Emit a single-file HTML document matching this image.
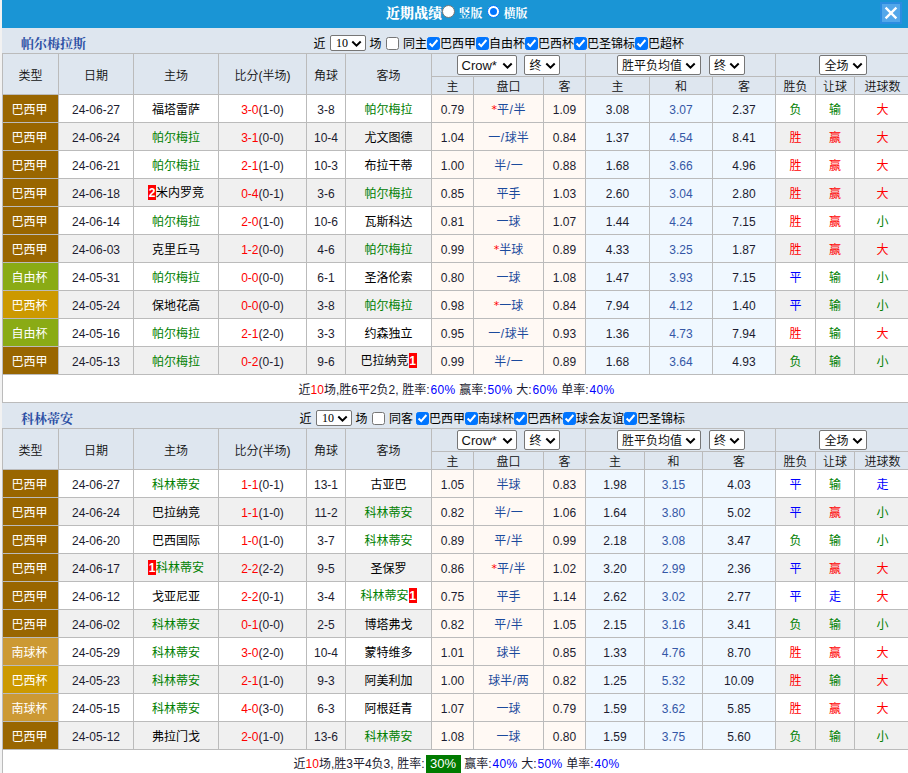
<!DOCTYPE html>
<html lang="zh-CN"><head><meta charset="utf-8"><title>近期战绩</title>
<style>
html,body{margin:0;padding:0;background:#f2f2f2;}
body{font-family:"Liberation Sans","Noto Sans CJK SC",sans-serif;font-size:12px;color:#000;}
#wrap{width:906px;height:773px;margin-left:2px;overflow:hidden;position:relative;background:#fff;}
.top{height:28px;background:#1a95d5;position:relative;color:#fff;white-space:nowrap;}
.tt{position:absolute;left:384px;top:5px;font-size:14px;font-family:"Liberation Serif","Noto Serif CJK SC",serif;font-weight:900;line-height:18px;}
.rd{position:absolute;top:5px;width:13px;height:13px;border-radius:50%;background:#fff;border:1px solid #767676;box-sizing:border-box;}
.rd.on{border:1px solid #0075ff;}
.rd.on i{position:absolute;left:2px;top:2px;width:7px;height:7px;border-radius:50%;background:#0075ff}
.rl{position:absolute;top:6px;font-size:12px;line-height:16px;font-family:"Liberation Serif","Noto Serif CJK SC",serif;font-weight:700}
.x{position:absolute;left:878px;top:2px;width:18px;height:18px;background:#54a7ea;border:2px solid #2b8de1;}
.x svg{display:block}
.st{height:25px;background:#dee6ef;position:relative;}
.tn{position:absolute;left:19px;top:7px;font-size:13px;line-height:17px;color:#2d50a5;font-family:"Liberation Serif","Noto Serif CJK SC",serif;}
.ft{position:absolute;top:8px;line-height:16px;white-space:nowrap}
table{border-collapse:collapse;table-layout:fixed;width:908px;}
th,td{border:1px solid #bbb;text-align:center;padding:0;font-weight:normal;overflow:hidden;white-space:nowrap;}
th{background:#dee6ef;font-weight:350;color:#111}
tr.h1{height:23px}
tr.h2{height:18px}
tr.od,tr.ev,tr.sm{height:28px}
tr.ev td{background:#f0f0f0}
td.ty{color:#fff;padding-right:2px}
td.hc{background:#fff9f4 !important}
td.oc{background:#f0f8ff !important}
td.n,td.dt{color:#1c1c30;padding-top:2px}
.g{color:#008000}.r{color:#ff0000}.b{color:#0000ff}.k{color:#000}
.pk{color:#1b4a9c}
.pk i{color:#f00;font-style:normal;font-family:"DejaVu Sans",sans-serif;font-size:11px;position:relative;top:-1px}
.pk u{text-decoration:none;margin:0 0.7px}
td.o2{color:#3457a6}
.rc{background:#f00;color:#fff;font-weight:bold;display:inline-block;width:8px;height:15px;line-height:17px;vertical-align:middle;position:relative;top:-2px;text-align:center;overflow:hidden;letter-spacing:-0.3px}
.sm td{background:#fff;border-bottom:1px solid #bbb}
.lo{background:#007a00;color:#fff;display:inline-block;height:18px;line-height:18px;padding:0 4.5px;font-size:13px;vertical-align:middle;position:relative;top:-0.5px}
.sm td{color:#1c1c30;word-spacing:0.4px}
.sm .b{letter-spacing:0.33px}
.sm s{text-decoration:none;letter-spacing:0.9px}
.sm em{font-style:normal;color:#000}
.sel{display:inline-block;box-sizing:border-box;height:20px;border:1px solid #767676;border-radius:2px;background:#fff;vertical-align:middle;text-align:left;padding-left:4.5px;padding-top:2px;line-height:16px;position:relative;font-size:12px;color:#111;font-weight:400}
.sel svg{position:absolute;right:3.3px;top:5.6px}
.sel.s10{position:absolute;top:7px;height:16px;line-height:14px;padding-top:0;color:#000;font-family:"Liberation Serif",serif;padding-left:5px}
.sel.s10 svg{top:4px}
.cb{position:absolute;top:9px;width:13px;height:13px;box-sizing:border-box;border:1px solid #767676;border-radius:2.5px;background:#fff;}
.cb.on{background:#0075ff;border-color:#0075ff}
.cb svg{position:absolute;left:-1px;top:-1px}
</style></head><body>
<div id="wrap">
<div class="top"><b class="tt">近期战绩</b><span class="rd" style="left:439.5px"></span><span class="rl" style="left:456.5px">竖版</span><span class="rd on" style="left:485px"><i></i></span><span class="rl" style="left:501.5px">横版</span>
<span class="x"><svg width="18" height="18" viewBox="0 0 18 18"><path d="M3.6 3.6 L14.4 14.4 M14.4 3.6 L3.6 14.4" stroke="#fff" stroke-width="2.3" fill="none"/></svg></span></div>
<div class="st"><b class="tn">帕尔梅拉斯</b><span class="ft" style="left:311.5px">近</span><span class="sel s10" style="left:328.0px;width:36px"><span>10</span><svg width="11" height="8" viewBox="0 0 11 8"><path d="M1.3 1.5 L5.5 5.6 L9.7 1.5" fill="none" stroke="#000" stroke-width="2"/></svg></span><span class="ft" style="left:367.5px">场</span><span class="cb" style="left:384.0px"></span><span class="ft" style="left:401.0px">同主</span><span class="cb on" style="left:425.0px"><svg width="13" height="13" viewBox="0 0 13 13"><path d="M2.6 6.5 L5.2 9.1 L10.4 3.0" fill="none" stroke="#fff" stroke-width="2"/></svg></span><span class="ft" style="left:438.0px">巴西甲</span><span class="cb on" style="left:474.0px"><svg width="13" height="13" viewBox="0 0 13 13"><path d="M2.6 6.5 L5.2 9.1 L10.4 3.0" fill="none" stroke="#fff" stroke-width="2"/></svg></span><span class="ft" style="left:487.0px">自由杯</span><span class="cb on" style="left:523.0px"><svg width="13" height="13" viewBox="0 0 13 13"><path d="M2.6 6.5 L5.2 9.1 L10.4 3.0" fill="none" stroke="#fff" stroke-width="2"/></svg></span><span class="ft" style="left:536.0px">巴西杯</span><span class="cb on" style="left:572.0px"><svg width="13" height="13" viewBox="0 0 13 13"><path d="M2.6 6.5 L5.2 9.1 L10.4 3.0" fill="none" stroke="#fff" stroke-width="2"/></svg></span><span class="ft" style="left:585.0px">巴圣锦标</span><span class="cb on" style="left:633.0px"><svg width="13" height="13" viewBox="0 0 13 13"><path d="M2.6 6.5 L5.2 9.1 L10.4 3.0" fill="none" stroke="#fff" stroke-width="2"/></svg></span><span class="ft" style="left:646.0px">巴超杯</span></div>
<table cellspacing="0" cellpadding="0"><colgroup><col style="width:56px"><col style="width:75px"><col style="width:85px"><col style="width:88px"><col style="width:39px"><col style="width:86px"><col style="width:42px"><col style="width:70px"><col style="width:42px"><col style="width:64px"><col style="width:63px"><col style="width:63px"><col style="width:40px"><col style="width:39px"><col style="width:56px"></colgroup>
<tr class="h1"><th rowspan="2" class="c0">类型</th><th rowspan="2" class="c1">日期</th><th rowspan="2" class="c2">主场</th><th rowspan="2" class="c3">比分(半场)</th><th rowspan="2" class="c4">角球</th><th rowspan="2" class="c5">客场</th><th colspan="3" class="sh"><span class="sel" style="width:60px;margin-left:0px"><span><span style="font-size:13px;margin-left:-1px">Crow*</span></span><svg width="11" height="8" viewBox="0 0 11 8"><path d="M1.3 1.5 L5.5 5.6 L9.7 1.5" fill="none" stroke="#000" stroke-width="2"/></svg></span><span class="sel" style="width:36px;margin-left:7px"><span>终</span><svg width="11" height="8" viewBox="0 0 11 8"><path d="M1.3 1.5 L5.5 5.6 L9.7 1.5" fill="none" stroke="#000" stroke-width="2"/></svg></span></th><th colspan="3" class="sh"><span class="sel" style="width:84px;margin-left:0px"><span>胜平负均值</span><svg width="11" height="8" viewBox="0 0 11 8"><path d="M1.3 1.5 L5.5 5.6 L9.7 1.5" fill="none" stroke="#000" stroke-width="2"/></svg></span><span class="sel" style="width:36px;margin-left:8px"><span>终</span><svg width="11" height="8" viewBox="0 0 11 8"><path d="M1.3 1.5 L5.5 5.6 L9.7 1.5" fill="none" stroke="#000" stroke-width="2"/></svg></span></th><th colspan="3" class="sh"><span class="sel" style="width:48px;margin-left:0px"><span>全场</span><svg width="11" height="8" viewBox="0 0 11 8"><path d="M1.3 1.5 L5.5 5.6 L9.7 1.5" fill="none" stroke="#000" stroke-width="2"/></svg></span></th></tr><tr class="h2"><th class="c6">主</th><th class="c7">盘口</th><th class="c8">客</th><th class="c9">主</th><th class="c10">和</th><th class="c11">客</th><th class="c12">胜负</th><th class="c13">让球</th><th class="c14">进球数</th></tr>
<tr class="od"><td class="ty" style="background:#996600">巴西甲</td><td class="dt">24-06-27</td><td><span class="k">福塔雷萨</span></td><td class="n"><span class="r">3-0</span>(1-0)</td><td class="n">3-8</td><td><span class="g">帕尔梅拉</span></td><td class="hc n">0.79</td><td class="hc pk"><i>*</i>平<u>/</u>半</td><td class="hc n">1.09</td><td class="oc n">3.08</td><td class="oc n o2">3.07</td><td class="oc n">2.37</td><td class="g">负</td><td class="g">输</td><td class="r">大</td></tr>
<tr class="ev"><td class="ty" style="background:#996600">巴西甲</td><td class="dt">24-06-24</td><td><span class="g">帕尔梅拉</span></td><td class="n"><span class="r">3-1</span>(0-0)</td><td class="n">10-4</td><td><span class="k">尤文图德</span></td><td class="hc n">1.04</td><td class="hc pk">一<u>/</u>球半</td><td class="hc n">0.84</td><td class="oc n">1.37</td><td class="oc n o2">4.54</td><td class="oc n">8.41</td><td class="r">胜</td><td class="r">赢</td><td class="r">大</td></tr>
<tr class="od"><td class="ty" style="background:#996600">巴西甲</td><td class="dt">24-06-21</td><td><span class="g">帕尔梅拉</span></td><td class="n"><span class="r">2-1</span>(1-0)</td><td class="n">10-3</td><td><span class="k">布拉干蒂</span></td><td class="hc n">1.00</td><td class="hc pk">半<u>/</u>一</td><td class="hc n">0.88</td><td class="oc n">1.68</td><td class="oc n o2">3.66</td><td class="oc n">4.96</td><td class="r">胜</td><td class="r">赢</td><td class="r">大</td></tr>
<tr class="ev"><td class="ty" style="background:#996600">巴西甲</td><td class="dt">24-06-18</td><td><span class="rc">2</span><span class="k">米内罗竞</span></td><td class="n"><span class="r">0-4</span>(0-1)</td><td class="n">3-6</td><td><span class="g">帕尔梅拉</span></td><td class="hc n">0.85</td><td class="hc pk">平手</td><td class="hc n">1.03</td><td class="oc n">2.60</td><td class="oc n o2">3.04</td><td class="oc n">2.80</td><td class="r">胜</td><td class="r">赢</td><td class="r">大</td></tr>
<tr class="od"><td class="ty" style="background:#996600">巴西甲</td><td class="dt">24-06-14</td><td><span class="g">帕尔梅拉</span></td><td class="n"><span class="r">2-0</span>(1-0)</td><td class="n">10-6</td><td><span class="k">瓦斯科达</span></td><td class="hc n">0.81</td><td class="hc pk">一球</td><td class="hc n">1.07</td><td class="oc n">1.44</td><td class="oc n o2">4.24</td><td class="oc n">7.15</td><td class="r">胜</td><td class="r">赢</td><td class="g">小</td></tr>
<tr class="ev"><td class="ty" style="background:#996600">巴西甲</td><td class="dt">24-06-03</td><td><span class="k">克里丘马</span></td><td class="n"><span class="r">1-2</span>(0-0)</td><td class="n">4-6</td><td><span class="g">帕尔梅拉</span></td><td class="hc n">0.99</td><td class="hc pk"><i>*</i>半球</td><td class="hc n">0.89</td><td class="oc n">4.33</td><td class="oc n o2">3.25</td><td class="oc n">1.87</td><td class="r">胜</td><td class="r">赢</td><td class="r">大</td></tr>
<tr class="od"><td class="ty" style="background:#8aab15">自由杯</td><td class="dt">24-05-31</td><td><span class="g">帕尔梅拉</span></td><td class="n"><span class="r">0-0</span>(0-0)</td><td class="n">6-1</td><td><span class="k">圣洛伦索</span></td><td class="hc n">0.80</td><td class="hc pk">一球</td><td class="hc n">1.08</td><td class="oc n">1.47</td><td class="oc n o2">3.93</td><td class="oc n">7.15</td><td class="b">平</td><td class="g">输</td><td class="g">小</td></tr>
<tr class="ev"><td class="ty" style="background:#cc9900">巴西杯</td><td class="dt">24-05-24</td><td><span class="k">保地花高</span></td><td class="n"><span class="r">0-0</span>(0-0)</td><td class="n">3-8</td><td><span class="g">帕尔梅拉</span></td><td class="hc n">0.98</td><td class="hc pk"><i>*</i>一球</td><td class="hc n">0.84</td><td class="oc n">7.94</td><td class="oc n o2">4.12</td><td class="oc n">1.40</td><td class="b">平</td><td class="g">输</td><td class="g">小</td></tr>
<tr class="od"><td class="ty" style="background:#8aab15">自由杯</td><td class="dt">24-05-16</td><td><span class="g">帕尔梅拉</span></td><td class="n"><span class="r">2-1</span>(2-0)</td><td class="n">3-3</td><td><span class="k">约森独立</span></td><td class="hc n">0.95</td><td class="hc pk">一<u>/</u>球半</td><td class="hc n">0.93</td><td class="oc n">1.36</td><td class="oc n o2">4.73</td><td class="oc n">7.94</td><td class="r">胜</td><td class="g">输</td><td class="r">大</td></tr>
<tr class="ev"><td class="ty" style="background:#996600">巴西甲</td><td class="dt">24-05-13</td><td><span class="g">帕尔梅拉</span></td><td class="n"><span class="r">0-2</span>(0-1)</td><td class="n">9-6</td><td><span class="k">巴拉纳竞</span><span class="rc">1</span></td><td class="hc n">0.99</td><td class="hc pk">半<u>/</u>一</td><td class="hc n">0.89</td><td class="oc n">1.68</td><td class="oc n o2">3.64</td><td class="oc n">4.93</td><td class="g">负</td><td class="g">输</td><td class="g">小</td></tr>
<tr class="sm"><td colspan="15">近<span class="r">10</span>场,胜6平2负2, 胜率<s>:</s><span class="b">60%</span> 赢率<s>:</s><span class="b">50%</span> 大<s>:</s><span class="b">60%</span> 单率<s>:</s><span class="b">40%</span></td></tr></table>

<div class="st"><b class="tn">科林蒂安</b><span class="ft" style="left:297.5px">近</span><span class="sel s10" style="left:314.0px;width:36px"><span>10</span><svg width="11" height="8" viewBox="0 0 11 8"><path d="M1.3 1.5 L5.5 5.6 L9.7 1.5" fill="none" stroke="#000" stroke-width="2"/></svg></span><span class="ft" style="left:353.5px">场</span><span class="cb" style="left:370.0px"></span><span class="ft" style="left:387.0px">同客</span><span class="cb on" style="left:414.0px"><svg width="13" height="13" viewBox="0 0 13 13"><path d="M2.6 6.5 L5.2 9.1 L10.4 3.0" fill="none" stroke="#fff" stroke-width="2"/></svg></span><span class="ft" style="left:427.0px">巴西甲</span><span class="cb on" style="left:463.0px"><svg width="13" height="13" viewBox="0 0 13 13"><path d="M2.6 6.5 L5.2 9.1 L10.4 3.0" fill="none" stroke="#fff" stroke-width="2"/></svg></span><span class="ft" style="left:476.0px">南球杯</span><span class="cb on" style="left:512.0px"><svg width="13" height="13" viewBox="0 0 13 13"><path d="M2.6 6.5 L5.2 9.1 L10.4 3.0" fill="none" stroke="#fff" stroke-width="2"/></svg></span><span class="ft" style="left:525.0px">巴西杯</span><span class="cb on" style="left:561.0px"><svg width="13" height="13" viewBox="0 0 13 13"><path d="M2.6 6.5 L5.2 9.1 L10.4 3.0" fill="none" stroke="#fff" stroke-width="2"/></svg></span><span class="ft" style="left:574.0px">球会友谊</span><span class="cb on" style="left:622.0px"><svg width="13" height="13" viewBox="0 0 13 13"><path d="M2.6 6.5 L5.2 9.1 L10.4 3.0" fill="none" stroke="#fff" stroke-width="2"/></svg></span><span class="ft" style="left:635.0px">巴圣锦标</span></div>
<table cellspacing="0" cellpadding="0"><colgroup><col style="width:56px"><col style="width:75px"><col style="width:85px"><col style="width:88px"><col style="width:39px"><col style="width:86px"><col style="width:42px"><col style="width:70px"><col style="width:42px"><col style="width:59px"><col style="width:58px"><col style="width:73px"><col style="width:40px"><col style="width:39px"><col style="width:56px"></colgroup>
<tr class="h1"><th rowspan="2" class="c0">类型</th><th rowspan="2" class="c1">日期</th><th rowspan="2" class="c2">主场</th><th rowspan="2" class="c3">比分(半场)</th><th rowspan="2" class="c4">角球</th><th rowspan="2" class="c5">客场</th><th colspan="3" class="sh"><span class="sel" style="width:60px;margin-left:0px"><span><span style="font-size:13px;margin-left:-1px">Crow*</span></span><svg width="11" height="8" viewBox="0 0 11 8"><path d="M1.3 1.5 L5.5 5.6 L9.7 1.5" fill="none" stroke="#000" stroke-width="2"/></svg></span><span class="sel" style="width:36px;margin-left:7px"><span>终</span><svg width="11" height="8" viewBox="0 0 11 8"><path d="M1.3 1.5 L5.5 5.6 L9.7 1.5" fill="none" stroke="#000" stroke-width="2"/></svg></span></th><th colspan="3" class="sh"><span class="sel" style="width:84px;margin-left:0px"><span>胜平负均值</span><svg width="11" height="8" viewBox="0 0 11 8"><path d="M1.3 1.5 L5.5 5.6 L9.7 1.5" fill="none" stroke="#000" stroke-width="2"/></svg></span><span class="sel" style="width:36px;margin-left:8px"><span>终</span><svg width="11" height="8" viewBox="0 0 11 8"><path d="M1.3 1.5 L5.5 5.6 L9.7 1.5" fill="none" stroke="#000" stroke-width="2"/></svg></span></th><th colspan="3" class="sh"><span class="sel" style="width:48px;margin-left:0px"><span>全场</span><svg width="11" height="8" viewBox="0 0 11 8"><path d="M1.3 1.5 L5.5 5.6 L9.7 1.5" fill="none" stroke="#000" stroke-width="2"/></svg></span></th></tr><tr class="h2"><th class="c6">主</th><th class="c7">盘口</th><th class="c8">客</th><th class="c9">主</th><th class="c10">和</th><th class="c11">客</th><th class="c12">胜负</th><th class="c13">让球</th><th class="c14">进球数</th></tr>
<tr class="od"><td class="ty" style="background:#996600">巴西甲</td><td class="dt">24-06-27</td><td><span class="g">科林蒂安</span></td><td class="n"><span class="r">1-1</span>(0-1)</td><td class="n">13-1</td><td><span class="k">古亚巴</span></td><td class="hc n">1.05</td><td class="hc pk">半球</td><td class="hc n">0.83</td><td class="oc n">1.98</td><td class="oc n o2">3.15</td><td class="oc n">4.03</td><td class="b">平</td><td class="g">输</td><td class="b">走</td></tr>
<tr class="ev"><td class="ty" style="background:#996600">巴西甲</td><td class="dt">24-06-24</td><td><span class="k">巴拉纳竞</span></td><td class="n"><span class="r">1-1</span>(1-0)</td><td class="n">11-2</td><td><span class="g">科林蒂安</span></td><td class="hc n">0.82</td><td class="hc pk">半<u>/</u>一</td><td class="hc n">1.06</td><td class="oc n">1.64</td><td class="oc n o2">3.80</td><td class="oc n">5.02</td><td class="b">平</td><td class="r">赢</td><td class="g">小</td></tr>
<tr class="od"><td class="ty" style="background:#996600">巴西甲</td><td class="dt">24-06-20</td><td><span class="k">巴西国际</span></td><td class="n"><span class="r">1-0</span>(1-0)</td><td class="n">3-7</td><td><span class="g">科林蒂安</span></td><td class="hc n">0.89</td><td class="hc pk">平<u>/</u>半</td><td class="hc n">0.99</td><td class="oc n">2.18</td><td class="oc n o2">3.08</td><td class="oc n">3.47</td><td class="g">负</td><td class="g">输</td><td class="g">小</td></tr>
<tr class="ev"><td class="ty" style="background:#996600">巴西甲</td><td class="dt">24-06-17</td><td><span class="rc">1</span><span class="g">科林蒂安</span></td><td class="n"><span class="r">2-2</span>(2-2)</td><td class="n">9-5</td><td><span class="k">圣保罗</span></td><td class="hc n">0.86</td><td class="hc pk"><i>*</i>平<u>/</u>半</td><td class="hc n">1.02</td><td class="oc n">3.20</td><td class="oc n o2">2.99</td><td class="oc n">2.36</td><td class="b">平</td><td class="r">赢</td><td class="r">大</td></tr>
<tr class="od"><td class="ty" style="background:#996600">巴西甲</td><td class="dt">24-06-12</td><td><span class="k">戈亚尼亚</span></td><td class="n"><span class="r">2-2</span>(0-1)</td><td class="n">3-4</td><td><span class="g">科林蒂安</span><span class="rc">1</span></td><td class="hc n">0.75</td><td class="hc pk">平手</td><td class="hc n">1.14</td><td class="oc n">2.62</td><td class="oc n o2">3.02</td><td class="oc n">2.77</td><td class="b">平</td><td class="b">走</td><td class="r">大</td></tr>
<tr class="ev"><td class="ty" style="background:#996600">巴西甲</td><td class="dt">24-06-02</td><td><span class="g">科林蒂安</span></td><td class="n"><span class="r">0-1</span>(0-0)</td><td class="n">2-5</td><td><span class="k">博塔弗戈</span></td><td class="hc n">0.82</td><td class="hc pk">平<u>/</u>半</td><td class="hc n">1.05</td><td class="oc n">2.15</td><td class="oc n o2">3.16</td><td class="oc n">3.41</td><td class="g">负</td><td class="g">输</td><td class="g">小</td></tr>
<tr class="od"><td class="ty" style="background:#cc9933">南球杯</td><td class="dt">24-05-29</td><td><span class="g">科林蒂安</span></td><td class="n"><span class="r">3-0</span>(2-0)</td><td class="n">10-4</td><td><span class="k">蒙特维多</span></td><td class="hc n">1.01</td><td class="hc pk">球半</td><td class="hc n">0.85</td><td class="oc n">1.33</td><td class="oc n o2">4.76</td><td class="oc n">8.70</td><td class="r">胜</td><td class="r">赢</td><td class="r">大</td></tr>
<tr class="ev"><td class="ty" style="background:#cc9900">巴西杯</td><td class="dt">24-05-23</td><td><span class="g">科林蒂安</span></td><td class="n"><span class="r">2-1</span>(1-0)</td><td class="n">9-3</td><td><span class="k">阿美利加</span></td><td class="hc n">1.00</td><td class="hc pk">球半<u>/</u>两</td><td class="hc n">0.82</td><td class="oc n">1.25</td><td class="oc n o2">5.32</td><td class="oc n">10.09</td><td class="r">胜</td><td class="g">输</td><td class="r">大</td></tr>
<tr class="od"><td class="ty" style="background:#cc9933">南球杯</td><td class="dt">24-05-15</td><td><span class="g">科林蒂安</span></td><td class="n"><span class="r">4-0</span>(3-0)</td><td class="n">6-3</td><td><span class="k">阿根廷青</span></td><td class="hc n">1.07</td><td class="hc pk">一球</td><td class="hc n">0.79</td><td class="oc n">1.59</td><td class="oc n o2">3.62</td><td class="oc n">5.85</td><td class="r">胜</td><td class="r">赢</td><td class="r">大</td></tr>
<tr class="ev"><td class="ty" style="background:#996600">巴西甲</td><td class="dt">24-05-12</td><td><span class="k">弗拉门戈</span></td><td class="n"><span class="r">2-0</span>(1-0)</td><td class="n">13-6</td><td><span class="g">科林蒂安</span></td><td class="hc n">1.08</td><td class="hc pk">一球</td><td class="hc n">0.80</td><td class="oc n">1.59</td><td class="oc n o2">3.75</td><td class="oc n">5.60</td><td class="g">负</td><td class="g">输</td><td class="g">小</td></tr>
<tr class="sm"><td colspan="15">近<span class="r">10</span>场,胜3平4负3, 胜率<s>:</s><span class="lo">30%</span> 赢率<s>:</s><span class="b">40%</span> 大<s>:</s><span class="b">50%</span> 单率<s>:</s><span class="b">40%</span></td></tr></table>

</div>
</body></html>
